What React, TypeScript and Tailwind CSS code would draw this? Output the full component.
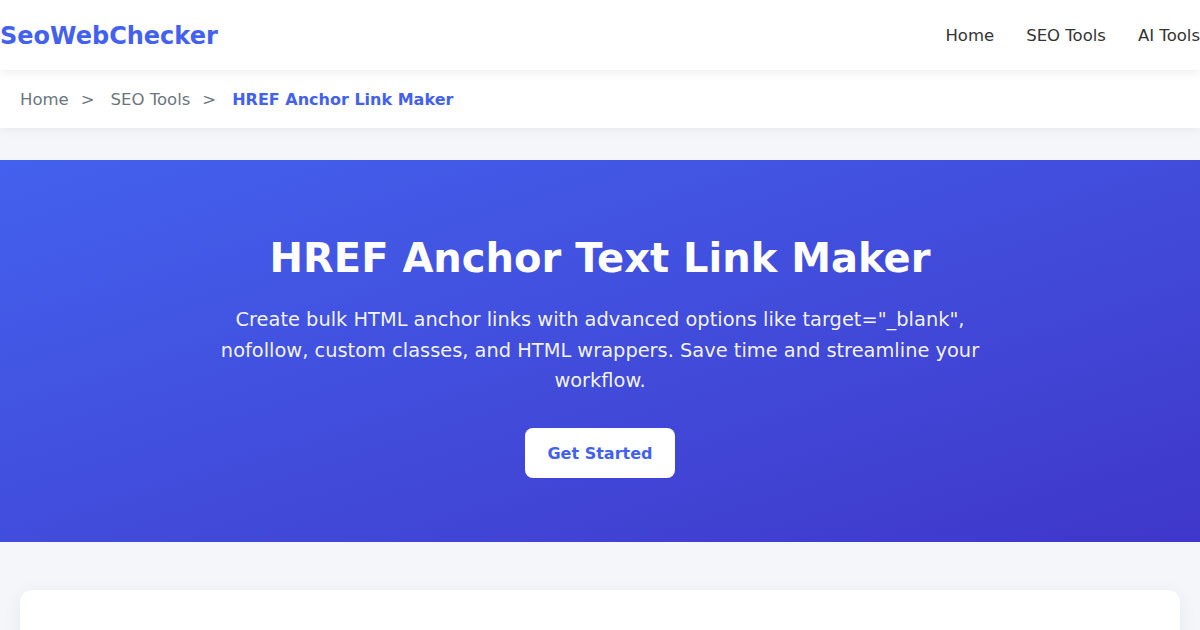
const navLinks = ['Home', 'SEO Tools', 'AI Tools']

function App() {
  return (
    <div className="min-h-screen bg-[#f5f6fa] font-['DejaVu_Sans',sans-serif] overflow-hidden">
      {/* Header */}
      <header className="bg-white shadow-[0_2px_10px_rgba(0,0,0,0.08)] relative z-10">
        <div className="max-w-[1200px] mx-auto h-[70px] pt-[2px] flex items-center justify-between">
          <a className="text-[24px] font-bold text-[#4361ee]">SeoWebChecker</a>
          <nav className="flex gap-8">
            {navLinks.map(l => (
              <a key={l} className="text-[16.5px] text-[#333]">{l}</a>
            ))}
          </nav>
        </div>
      </header>

      {/* Breadcrumb */}
      <div className="bg-white shadow-[0_2px_10px_rgba(0,0,0,0.06)]">
        <div className="max-w-[1200px] mx-auto h-[58px] pt-[2px] px-5 flex items-center text-[16.5px]">
          <span className="text-[#6c757d]">Home</span>
          <span className="text-[#6c757d] ml-[12px] mr-[16px]">&gt;</span>
          <span className="text-[#6c757d]">SEO Tools</span>
          <span className="text-[#6c757d] ml-[12px] mr-[16px]">&gt;</span>
          <span className="text-[#4361ee] font-bold text-[16px]">HREF Anchor Link Maker</span>
        </div>
      </div>

      {/* Hero */}
      <section className="mt-8 bg-linear-to-br from-[#4361ee] to-[#3f37c9] text-white text-center pt-[74px] pb-16 px-5">
        <h1 className="text-[40px] leading-[48px] font-bold">HREF Anchor Text Link Maker</h1>
        <p className="mt-[23px] max-w-[800px] mx-auto text-[19.4px] leading-[30.5px] text-white/95">
          Create bulk HTML anchor links with advanced options like target="_blank", nofollow, custom classes, and HTML wrappers. Save time and streamline your workflow.
        </p>
        <button className="mt-[31px] w-[150px] h-[50px] pt-[2px] bg-white rounded-lg text-[#4361ee] font-bold text-[16px]">
          Get Started
        </button>
      </section>

      {/* Tool card */}
      <main className="max-w-[1200px] mx-auto px-5 mt-12">
        <div className="bg-white rounded-xl shadow-[0_4px_20px_rgba(0,0,0,0.06)] h-[300px]" />
      </main>
    </div>
  )
}

export default App
